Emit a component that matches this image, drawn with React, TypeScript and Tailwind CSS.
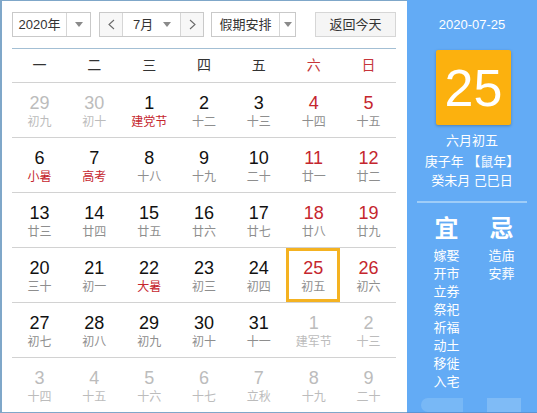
import React from "react";

type Cell = { d: number; l: string; other?: boolean; wk?: boolean; fest?: boolean; sel?: boolean };

const rows: Cell[][] = [
  [
    { d: 29, l: "初九", other: true },
    { d: 30, l: "初十", other: true },
    { d: 1, l: "建党节", fest: true },
    { d: 2, l: "十二" },
    { d: 3, l: "十三" },
    { d: 4, l: "十四", wk: true },
    { d: 5, l: "十五", wk: true },
  ],
  [
    { d: 6, l: "小暑", fest: true },
    { d: 7, l: "高考", fest: true },
    { d: 8, l: "十八" },
    { d: 9, l: "十九" },
    { d: 10, l: "二十" },
    { d: 11, l: "廿一", wk: true },
    { d: 12, l: "廿二", wk: true },
  ],
  [
    { d: 13, l: "廿三" },
    { d: 14, l: "廿四" },
    { d: 15, l: "廿五" },
    { d: 16, l: "廿六" },
    { d: 17, l: "廿七" },
    { d: 18, l: "廿八", wk: true },
    { d: 19, l: "廿九", wk: true },
  ],
  [
    { d: 20, l: "三十" },
    { d: 21, l: "初一" },
    { d: 22, l: "大暑", fest: true },
    { d: 23, l: "初三" },
    { d: 24, l: "初四" },
    { d: 25, l: "初五", wk: true, sel: true },
    { d: 26, l: "初六", wk: true },
  ],
  [
    { d: 27, l: "初七" },
    { d: 28, l: "初八" },
    { d: 29, l: "初九" },
    { d: 30, l: "初十" },
    { d: 31, l: "十一" },
    { d: 1, l: "建军节", other: true },
    { d: 2, l: "十三", other: true },
  ],
  [
    { d: 3, l: "十四", other: true },
    { d: 4, l: "十五", other: true },
    { d: 5, l: "十六", other: true },
    { d: 6, l: "十七", other: true },
    { d: 7, l: "立秋", other: true },
    { d: 8, l: "十九", other: true },
    { d: 9, l: "二十", other: true },
  ],
];

const Caret = () => (
  <svg width="8" height="5" viewBox="0 0 8 5">
    <path d="M0 0 L8 0 L4 5 Z" fill="#8a8a8a" />
  </svg>
);

const Chev = ({ right }: { right?: boolean }) => (
  <svg width="7" height="11" viewBox="0 0 7 11">
    <path
      d={right ? "M1 1 L6 5.5 L1 10" : "M6 1 L1 5.5 L6 10"}
      fill="none"
      stroke="#6a6a6a"
      strokeWidth="1.1"
    />
  </svg>
);

const yi = ["嫁娶", "开市", "立券", "祭祀", "祈福", "动土", "移徙", "入宅"];
const ji = ["造庙", "安葬"];

export default function App() {
  return (
    <div
      className="flex w-[537px] h-[413px] overflow-hidden bg-white"
      style={{ fontFamily: '"Liberation Sans", "Noto Sans CJK SC", sans-serif' }}
    >
      {/* left panel */}
      <div className="w-[407px] h-[413px] box-border border-l-2 border-t border-b border-[#7fa7c9] pl-[10px] pt-[11px]">
        {/* toolbar */}
        <div className="flex items-center h-[25px] text-[13px] text-[#333] whitespace-nowrap">
          <div className="flex h-[25px] w-[79px] border border-[#c9c9c9] bg-white">
            <div className="flex-1 flex items-center justify-center border-r border-[#d6d6d6]">2020年</div>
            <div className="w-[23px] flex items-center justify-center">
              <Caret />
            </div>
          </div>
          <div className="flex h-[25px] w-[105px] ml-[8px] border border-[#c9c9c9]">
            <div className="w-[23px] flex items-center justify-center bg-[#f7f7f7] border-r border-[#d6d6d6]">
              <Chev />
            </div>
            <div className="flex-1 flex items-center justify-between bg-white pl-[10px] pr-[9px]">
              <span>7月</span>
              <Caret />
            </div>
            <div className="w-[23px] flex items-center justify-center bg-[#f7f7f7] border-l border-[#d6d6d6]">
              <Chev right />
            </div>
          </div>
          <div className="flex h-[25px] w-[85px] ml-[7px] border border-[#c9c9c9] bg-white">
            <div className="flex-1 flex items-center justify-center border-r border-[#d6d6d6]">假期安排</div>
            <div className="w-[15px] flex items-center justify-center">
              <Caret />
            </div>
          </div>
          <div className="flex h-[25px] w-[81px] ml-[19px] items-center justify-center border border-[#d6d6d6] bg-[#f5f5f5]">
            返回今天
          </div>
        </div>
        <div className="w-[384px] h-px bg-[#a3bfd4] mt-[11px]" />
        {/* weekday header */}
        <div className="grid grid-cols-7 w-[384px] h-[33px] items-center text-[14px] text-center">
          {["一", "二", "三", "四", "五", "六", "日"].map((w, i) => (
            <div key={w} className={i >= 5 ? "text-[#c6353a]" : "text-[#333]"}>
              {w}
            </div>
          ))}
        </div>
        {/* grid */}
        <div className="w-[384px]">
          {rows.map((r, ri) => (
            <div key={ri} className="grid grid-cols-7 h-[55px] border-t border-[#d2d2d2]">
              {r.map((c, ci) => {
                const numColor = c.other ? "text-[#bcbcbc]" : c.wk ? "text-[#c5262e]" : "text-[#111]";
                const lunColor = c.other ? "text-[#bcbcbc]" : c.fest ? "text-[#c5262e]" : "text-[#8e8e8e]";
                return (
                  <div
                    key={ci}
                    className={
                      "flex flex-col items-center box-border " +
                      (c.sel ? "border-[3px] border-[#f4b221] pt-[7px] mr-px" : "pt-[10px]")
                    }
                  >
                    <div className={"text-[18px] leading-[20px] " + numColor}>{c.d}</div>
                    <div className={"text-[12px] leading-[18px] " + lunColor}>{c.l}</div>
                  </div>
                );
              })}
            </div>
          ))}
        </div>
      </div>
      {/* right panel */}
      <div className="relative flex-1 h-[413px] bg-[#63abf5] border-b border-[#5a94d4] flex flex-col items-center text-white">
        <div className="mt-[16px] text-[13px] leading-[18px]">2020-07-25</div>
        <div className="mt-[16px] w-[75px] h-[75px] rounded-[2px] bg-[#fcb10e] shadow-[0_1px_3px_rgba(0,0,0,0.25)] flex items-center justify-center text-[52px] leading-none ml-[3px]">
          25
        </div>
        <div className="mt-[6px] text-[13px] leading-[19px] text-center">
          <div>六月初五</div>
          <div className="mt-[2px]">庚子年 【鼠年】</div>
          <div>癸未月 己巳日</div>
        </div>
        <div className="mt-[11px] w-[110px] h-[2px] bg-[#9fcdf8]" />
        <div className="mt-[12px] flex gap-[27px] ml-[4px]">
          {[
            ["宜", yi],
            ["忌", ji],
          ].map(([t, list]) => (
            <div key={t as string} className="flex flex-col items-center w-[28px]">
              <div className="text-[24px] leading-[28px] font-bold">{t as string}</div>
              <div className="mt-[4px] flex flex-col items-center">
                {(list as string[]).map((x) => (
                  <div key={x} className="text-[13px] leading-[18px]">
                    {x}
                  </div>
                ))}
              </div>
            </div>
          ))}
        </div>
        <div className="absolute bottom-0 left-[14px] w-[42px] h-[14px] rounded-l-full bg-[#82bdf7] opacity-70" />
        <div className="absolute bottom-0 left-[80px] w-[34px] h-[14px] bg-[#8cc2f6] opacity-70" />
      </div>
    </div>
  );
}
